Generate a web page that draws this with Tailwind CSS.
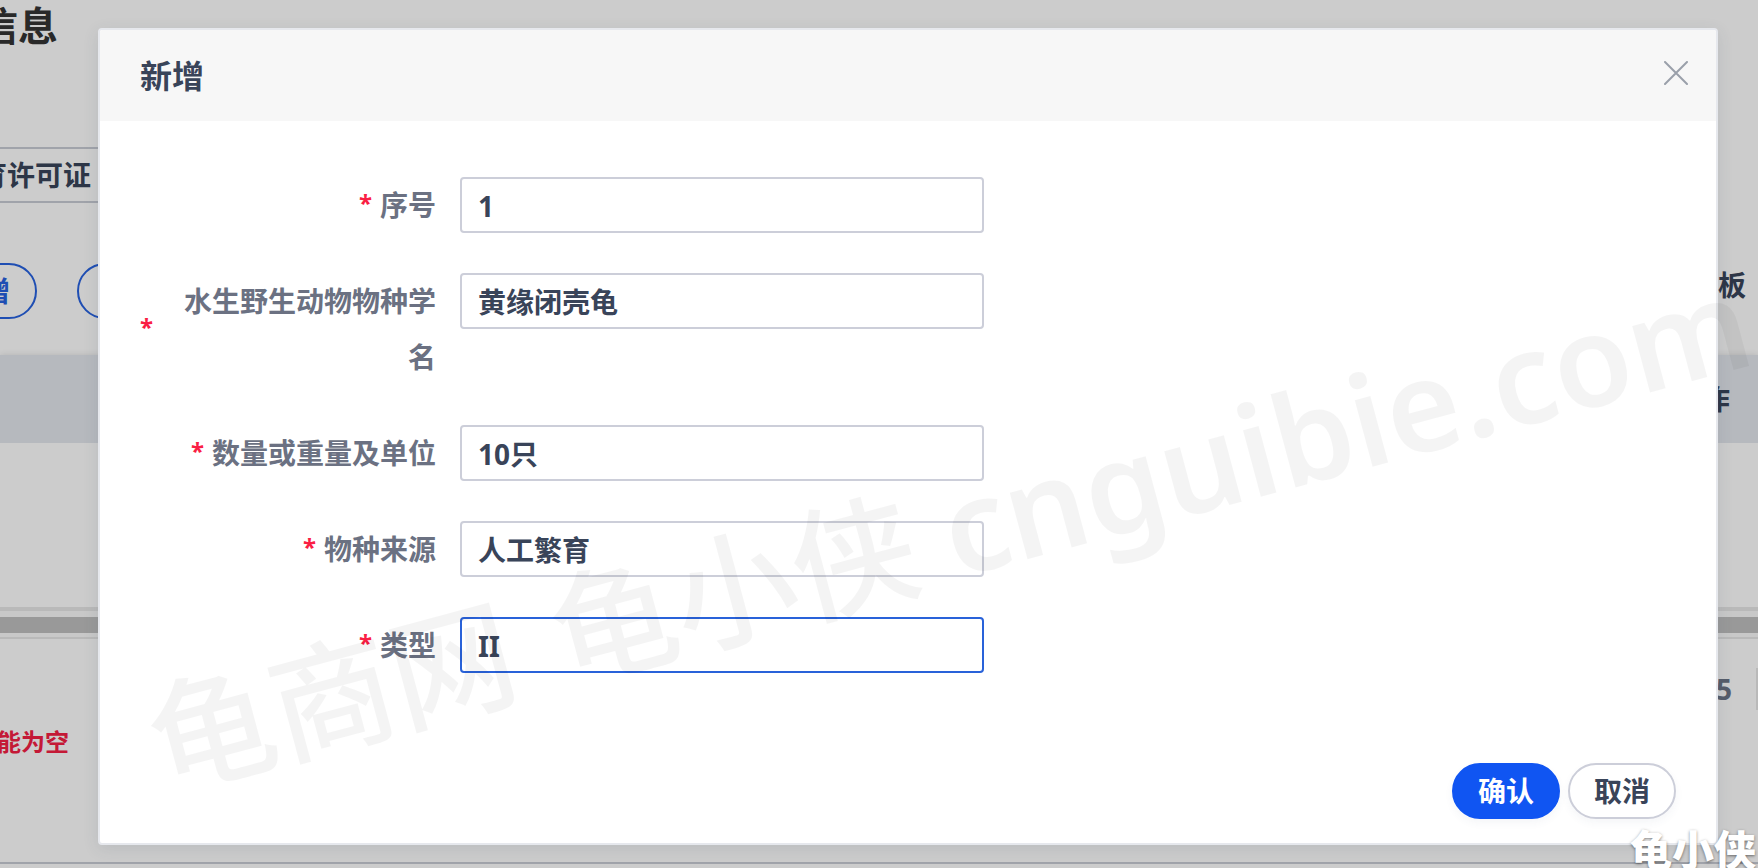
<!DOCTYPE html>
<html lang="zh-CN">
<head>
<meta charset="utf-8">
<meta name="viewport" content="width=device-width, initial-scale=1">
<title>新增</title>
<script src="https://cdn.jsdelivr.net/npm/@tailwindcss/browser@4"></script>
</head>
<body class="relative h-screen overflow-hidden bg-white font-['Noto_Sans','Noto_Sans_CJK_SC',sans-serif] text-[28px] leading-[56px] font-bold text-[#394459]">

<!-- Page behind the dialog -->
<main class="flex h-full flex-col">
  <header class="flex h-[147px] shrink-0 items-start">
    <h1 class="flex w-[58px] justify-end overflow-hidden text-[40px] leading-[52px] whitespace-nowrap text-[#343434]">信息</h1>
  </header>
  <div class="flex h-14 shrink-0 items-center border-y-2 border-[#c8ccd5] mr-20">
    <span class="flex w-[91px] justify-end overflow-hidden whitespace-nowrap">繁育许可证</span>
  </div>
  <div class="mt-[60px] flex h-14 shrink-0 items-center justify-between">
    <div class="flex gap-10">
      <div class="flex w-[37px] justify-end overflow-hidden">
        <button class="h-14 shrink-0 rounded-full border-2 border-[#2762e0] px-[25px] leading-[52px] text-[#2762e0]">新增</button>
      </div>
      <button class="h-14 rounded-full border-2 border-[#2762e0] px-[25px] leading-[52px] text-[#2762e0]">导入</button>
    </div>
    <a href="#" class="mr-3 -mt-3">下载模板</a>
  </div>
  <div class="mt-9 flex h-[88px] shrink-0 items-center justify-end bg-[#e4e8ee] pr-7 shadow-[0_0_6px_rgba(0,0,0,0.12)]">操作</div>
  <div class="h-[164px] shrink-0 bg-white"></div>
  <div class="h-1 shrink-0 bg-[#e8e8e8]"></div>
  <div class="h-7 shrink-0 border-b-2 border-[#e8e8e8] bg-[#fafafa] pt-[6px]">
    <div class="h-4 bg-[#c0c0c0]"></div>
  </div>
  <div class="flex shrink-0 justify-end pt-[22px]">
    <div class="flex items-center gap-6 text-[#6b7485]">共 5
      <span class="h-[42px] w-[2px] bg-[#e8e8e8]"></span>
    </div>
  </div>
  <p class="flex w-[69px] justify-end overflow-hidden text-2xl leading-[50px] whitespace-nowrap text-[#f52044]">不能为空</p>
  <div class="mt-auto mb-1 h-[2px] shrink-0 bg-[#c8ccd5]"></div>
</main>

<!-- Dialog -->
<div class="absolute inset-0 flex items-start bg-black/20 pt-7 pr-10 pl-[98px]">
  <section role="dialog" aria-labelledby="dialog-title" class="w-full overflow-hidden rounded border-2 border-[#e6e8ed] bg-white shadow-[0_4px_16px_rgba(60,70,90,0.12)]">
    <header class="flex h-[91px] items-center justify-between bg-[#f7f7f7] pr-7 pl-10">
      <h2 id="dialog-title" class="text-[32px] leading-10">新增</h2>
      <button aria-label="关闭" class="mb-[6px] text-[#9aa0aa]">
        <svg class="size-6" viewBox="0 0 24 24" fill="none" stroke="currentColor" stroke-width="2" stroke-linecap="round"><path d="M1 1 23 23M23 1 1 23"/></svg>
      </button>
    </header>
    <form class="flex flex-col gap-10 px-10 pt-14">
      <div class="flex items-start gap-6">
        <label for="f-no" class="flex w-[296px] items-center justify-end gap-2 text-right text-[#6b7182]"><span class="pb-1 text-2xl text-[#fa1e44]">*</span><span>序号</span></label>
        <input id="f-no" value="1" class="h-14 w-[524px] rounded border-2 border-[#ccced9] bg-white px-4 pt-[2px] outline-none">
      </div>
      <div class="flex items-start gap-6">
        <label for="f-name" class="flex w-[296px] items-center justify-end gap-2 text-right text-[#6b7182]"><span class="pb-1 text-2xl text-[#fa1e44]">*</span><span>水生野生动物物种学名</span></label>
        <input id="f-name" value="黄缘闭壳龟" class="h-14 w-[524px] rounded border-2 border-[#ccced9] bg-white px-4 pt-[2px] outline-none">
      </div>
      <div class="flex items-start gap-6">
        <label for="f-qty" class="flex w-[296px] items-center justify-end gap-2 text-right text-[#6b7182]"><span class="pb-1 text-2xl text-[#fa1e44]">*</span><span>数量或重量及单位</span></label>
        <input id="f-qty" value="10只" class="h-14 w-[524px] rounded border-2 border-[#ccced9] bg-white px-4 pt-[2px] outline-none">
      </div>
      <div class="flex items-start gap-6">
        <label for="f-src" class="flex w-[296px] items-center justify-end gap-2 text-right text-[#6b7182]"><span class="pb-1 text-2xl text-[#fa1e44]">*</span><span>物种来源</span></label>
        <input id="f-src" value="人工繁育" class="h-14 w-[524px] rounded border-2 border-[#ccced9] bg-white px-4 pt-[2px] outline-none">
      </div>
      <div class="flex items-start gap-6">
        <label for="f-type" class="flex w-[296px] items-center justify-end gap-2 text-right text-[#6b7182]"><span class="pb-1 text-2xl text-[#fa1e44]">*</span><span>类型</span></label>
        <input id="f-type" value="II" class="h-14 w-[524px] rounded border-2 border-[#2962d9] bg-white px-4 pt-[2px] outline-none">
      </div>
    </form>
    <footer class="flex justify-end gap-2 px-10 pt-[90px] pb-6">
      <button class="h-14 w-[108px] rounded-full border-2 border-[#1055f2] bg-[#1055f2] leading-[52px] text-white shadow-[0_4px_8px_rgba(60,70,120,0.05)]">确认</button>
      <button class="h-14 w-[108px] rounded-full border-2 border-[#ccced9] bg-white leading-[52px] shadow-[0_4px_8px_rgba(60,70,120,0.05)]">取消</button>
    </footer>
  </section>
</div>

<!-- Watermarks -->
<div class="pointer-events-none absolute bottom-[64px] left-[168px] flex origin-bottom-left -rotate-15 items-baseline gap-8 text-[124px] leading-[124px] font-medium whitespace-nowrap text-black/[0.045]">
  <span class="mr-3">龟商网</span><span>龟小侠</span><span class="text-[127px] font-semibold">cnguibie.com</span>
</div>
<div class="pointer-events-none absolute right-[2px] bottom-0 text-[42px] leading-9 font-black whitespace-nowrap text-white [text-shadow:0_1px_3px_rgba(0,0,0,0.5)]">龟小侠</div>
</body>
</html>
